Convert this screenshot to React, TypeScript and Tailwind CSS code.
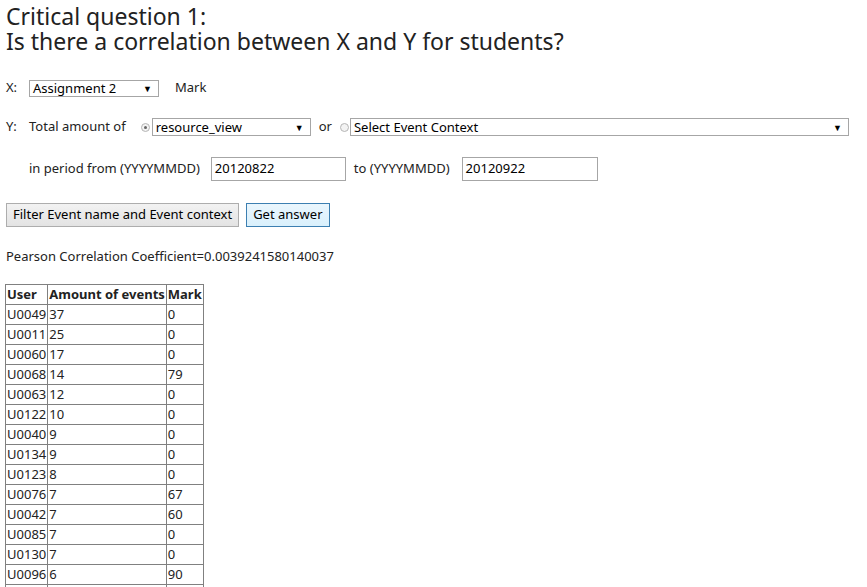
import React from "react";

const rows: [string, string, string][] = [
  ["U0049", "37", "0"],
  ["U0011", "25", "0"],
  ["U0060", "17", "0"],
  ["U0068", "14", "79"],
  ["U0063", "12", "0"],
  ["U0122", "10", "0"],
  ["U0040", "9", "0"],
  ["U0134", "9", "0"],
  ["U0123", "8", "0"],
  ["U0076", "7", "67"],
  ["U0042", "7", "60"],
  ["U0085", "7", "0"],
  ["U0130", "7", "0"],
  ["U0096", "6", "90"],
  ["U0101", "6", "0"],
];

const Select = ({ value, className }: { value: string; className: string }) => (
  <div
    className={`flex items-center justify-between border border-[#a6a6a6] bg-white pl-[3px] pr-[6px] text-[13px] leading-none text-black ${className}`}
  >
    <span>{value}</span>
    <span className="text-[9px]">▼</span>
  </div>
);

const Radio = ({ checked }: { checked?: boolean }) => (
  <span className="flex h-[9px] w-[9px] items-center justify-center rounded-full border border-[#b5b5b5] bg-[#f3f3f3]">
    {checked && <span className="h-[3px] w-[3px] rounded-full bg-[#666]" />}
  </span>
);

export default function App() {
  return (
    <div className="min-h-[587px] bg-white px-[6px] pt-[4px] font-['Noto_Sans',sans-serif] text-[13px] text-[#222]">
      <h1 className="text-[23px] font-normal leading-[25px] text-[#222]">
        Critical question 1:
        <br />
        Is there a correlation between X and Y for students?
      </h1>

      {/* X */}
      <div className="mt-[25px] flex h-[18px] items-center">
        <span className="w-[23px]">X:</span>
        <Select value="Assignment 2" className="h-[17px] w-[130px]" />
        <span className="ml-[16px]">Mark</span>
      </div>

      {/* Y */}
      <div className="mt-[20px] flex h-[20px] items-center">
        <span className="w-[23px]">Y:</span>
        <span>Total amount of</span>
        <span className="ml-[15px] mr-[2px]">
          <Radio checked />
        </span>
        <Select value="resource_view" className="h-[18px] w-[159px]" />
        <span className="ml-[8px] mr-[8px]">or</span>
        <span className="mr-[1px]">
          <Radio />
        </span>
        <Select value="Select Event Context" className="mr-[12px] h-[18px] flex-1" />
      </div>

      {/* period */}
      <div className="mt-[20px] flex h-[24px] items-center pl-[23px]">
        <span>in period from (YYYYMMDD)</span>
        <div className="ml-[11px] flex h-[24px] w-[135px] items-center border border-[#a6a6a6] px-[3px] text-black">
          20120822
        </div>
        <span className="ml-[8px]">to (YYYYMMDD)</span>
        <div className="ml-[12px] flex h-[24px] w-[136px] items-center border border-[#a6a6a6] px-[3px] text-black">
          20120922
        </div>
      </div>

      {/* buttons */}
      <div className="mt-[22px] flex gap-[7px]">
        <button className="h-[24px] border border-[#adadad] bg-gradient-to-b from-[#f2f2f2] to-[#e3e3e3] px-[6px] text-[13px] text-black">
          Filter Event name and Event context
        </button>
        <button className="h-[24px] border border-[#3c7fb1] bg-gradient-to-b from-[#eaf6fd] to-[#d9f0fc] px-[6px] text-[13px] text-black">
          Get answer
        </button>
      </div>

      <p className="mt-[20px] leading-[18px]">
        Pearson Correlation Coefficient=0.0039241580140037
      </p>

      <table className="-ml-[1px] mt-[19px] border-collapse border border-[#555] text-[13px] leading-[19px]">
        <thead>
          <tr>
            <th className="border border-[#808080] px-[1px] text-left font-bold">User</th>
            <th className="border border-[#808080] px-[1px] text-left font-bold">Amount of events</th>
            <th className="border border-[#808080] px-[1px] text-left font-bold">Mark</th>
          </tr>
        </thead>
        <tbody>
          {rows.map(([u, a, m]) => (
            <tr key={u}>
              <td className="border border-[#808080] px-[1px]">{u}</td>
              <td className="border border-[#808080] px-[1px]">{a}</td>
              <td className="border border-[#808080] px-[1px]">{m}</td>
            </tr>
          ))}
        </tbody>
      </table>
    </div>
  );
}
